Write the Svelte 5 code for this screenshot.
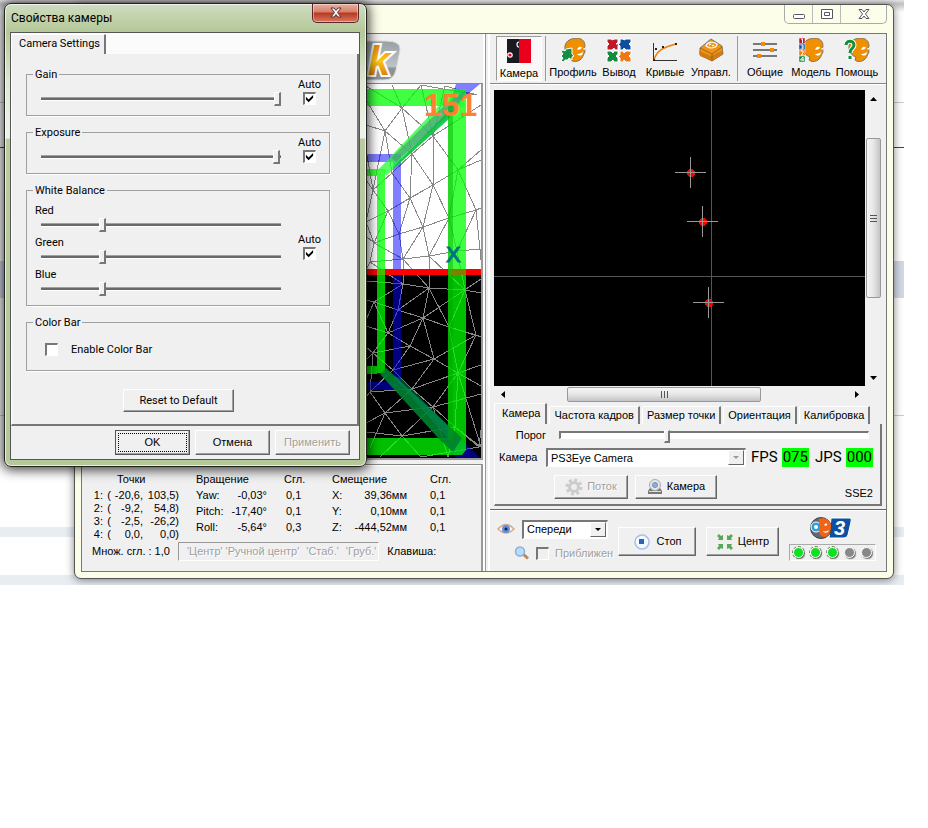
<script>
    let gain = 255
    let exposure = 254
    let threshold = 87
    let gainAuto = true
    let exposureAuto = true
    let whiteAuto = true
    let colorBar = false
    let zoomed = false
    let source = 'PS3Eye Camera'
    let view = 'Спереди'
    let activeTab = 'Камера'
    let activeTool = 'Камера'

    let balance = [
        {name: 'Red', value: 63},
        {name: 'Green', value: 63},
        {name: 'Blue', value: 64}
    ]

    const tools = [
        {name: 'Камера', icon: 'camera', split: true},
        {name: 'Профиль', icon: 'profile'},
        {name: 'Вывод', icon: 'output'},
        {name: 'Кривые', icon: 'curves'},
        {name: 'Управл.', icon: 'keys', split: true},
        {name: 'Общие', icon: 'general'},
        {name: 'Модель', icon: 'model'},
        {name: 'Помощь', icon: 'help'}
    ]

    const tabs = ['Камера', 'Частота кадров', 'Размер точки', 'Ориентация', 'Калибровка']

    const points = [
        ['1:', '-20,6,', '103,5)'],
        ['2:', '-9,2,', '54,8)'],
        ['3:', '-2,5,', '-26,2)'],
        ['4:', '0,0,', '0,0)']
    ]

    const axes = [
        ['Yaw:', '-0,03°', '0,1', 'X:', '39,36мм', '0,1'],
        ['Pitch:', '-17,40°', '0,1', 'Y:', '0,10мм', '0,1'],
        ['Roll:', '-5,64°', '0,3', 'Z:', '-444,52мм', '0,1']
    ]

    const blobs = [[690, 172], [702, 221], [708, 302]]
    const leds = [true, true, true, false, false]
</script>

{#snippet skull()}
    <path d="M5 8C6 2 12 0 18 0C23 1 25 4 25 8C24 10 25 12 25 14C23 17 23 20 20 22C17 24 13 24 11 22L12 19C8 18 4 13 5 8Z" fill="#f09000" stroke="#666" stroke-width=".8" />
    <path d="M18 10C19 8.500 21 8.500 22 9.500C21 11.500 18.500 12 17 11.500ZM23.500 10H25V11.500H23.500ZM17 16C19 16.500 22 15 23.500 13.500L22 17C20 18 18 17.500 17 16Z" fill="#fff" />
{/snippet}

{#snippet toolIcon(name)}
    <svg width="26" height="24" viewBox="0 0 26 24" aria-hidden="true">
        {#if name === 'camera'}
            <rect x="1" width="12" height="24" fill="#1a1820" />
            <rect x="13" width="12" height="24" fill="#e8001c" />
            <path d="M13 3A2 2.500 0 0 0 13 8" fill="none" stroke="#fff" stroke-width="1.200" />
            <circle cx="4" cy="16" r="2.200" fill="#e8001c" stroke="#fff" stroke-width="1.200" />
        {:else if name === 'profile'}
            {@render skull()}
            <path d="M1 13L3 12L5 13L6 11L12 10V16L14 18L12 19V22L9 20L8 22H5L4 24L1 23L3 20L1 18L3 16Z" fill="#129040" stroke="#fff" />
        {:else if name === 'output'}
            <g stroke="#fff" stroke-width="1">
                <path d="M1 1H5L7 2L8 1H12V4L10 6H13L12 8V12H9L8 10L6 12H1V8L3 6L1 4Z" fill="#c01828" />
                <path d="M14 1H17L18 2L20 1H25V4L23 6L25 8V12H20L18 10L17 12H14V8L12 6L14 5Z" fill="#0c4ea0" />
                <path d="M1 13H5L7 15L8 13H12V16L10 18L12 20V24H8L7 22L5 24H1V20L3 18L1 16Z" fill="#108c3c" />
                <path d="M14 13H17L18 15L20 13H25V16L23 18L25 20V24H20L18 22L17 24H14V20L12 18L14 17Z" fill="#f07810" />
            </g>
        {:else if name === 'curves'}
            <path d="M1.500 5V22.500H25" fill="none" stroke="#333" />
            <path d="M2 22C5 11 14 9 24 6" fill="none" stroke="#f07c10" stroke-width="1.500" />
            <path d="M3 10h2v2h-2zM10 8h2v2h-2zM23 5h2v2h-2zM1 21h2v2h-2z" fill="#222" />
        {:else if name === 'keys'}
            <path d="M2 10L13 1L24 8L25 16L14 23L2 17Z" fill="#f09418" stroke="#777" />
            <path d="M1 13L13 18L25 12L24 17L14 23L2 18Z" fill="#d07c10" />
            <path d="M2 10L14 16L24 9M14 16V23" fill="none" stroke="#905810" stroke-width=".8" />
            <path d="M8 8C9 4 15 3 19 6C19 9 15 10 12 10ZM11 7L13 6M14 8L16 7" fill="none" stroke="#fff" stroke-width="1.200" />
        {:else if name === 'general'}
            <path d="M1 6H25M1 12H25M1 18H25" stroke="#777" stroke-width="2" />
            <path d="M9 4h4v4h-4zM18 10h4v4h-4zM5 16h4v4h-4z" fill="#f08c00" />
        {:else if name === 'model'}
            {@render skull()}
            <g stroke="#fff" stroke-width=".5">
                <path d="M1 0h6v6h-6z" fill="#c01828" />
                <path d="M1 6h6v6h-6z" fill="#0c4ea0" />
                <path d="M1 12h6v6h-6z" fill="#f07810" />
                <path d="M1 18h6v6h-6z" fill="#108c3c" />
                <path d="M3 1L4.500 1V5M2.500 7H5V11H2.500M3.500 9H5M2.500 13H5V15L3 17H5.500M5 23V19L2.500 22H6" fill="none" stroke-width="1" />
            </g>
        {:else}
            {@render skull()}
            <g fill="none">
                <path d="M2 7C2 2 10 2 10 7C10 11 6 10 6 15M6 18V22" stroke="#fff" stroke-width="5" />
                <path d="M2 7C2 2 10 2 10 7C10 11 6 10 6 15M6 18V21" stroke="#109040" stroke-width="3" />
            </g>
        {/if}
    </svg>
{/snippet}

<div class="desktop">
    <div class="backdrop" aria-hidden="true">
        <div class="band band-top"></div>
        <div class="band rule"></div>
        <div class="band rule dark"></div>
        <div class="band block"></div>
        <div class="band rule far"></div>
        <div class="band soft"></div>
        <div class="band soft last"></div>
    </div>

    <section class="window">
        <header class="caption">
            <div class="caption-buttons">
                <button type="button" aria-label="Свернуть">
                    <svg width="14" height="12" viewBox="0 0 14 12"><rect x="1.500" y="6.500" width="11" height="4" rx="1" fill="#fff" stroke="#556" /></svg>
                </button>
                <button type="button" aria-label="Развернуть">
                    <svg width="14" height="12" viewBox="0 0 14 12"><path d="M1.500 1.500H12.500V10.500H1.500ZM4.500 4.500H9.500V7.500H4.500Z" fill="#fff" stroke="#556" /></svg>
                </button>
                <button type="button" class="wide" aria-label="Закрыть">
                    <svg width="14" height="12" viewBox="0 0 14 12"><path d="M2 1.500H5L7 4L9 1.500H12L8.500 6L12 10.500H9L7 8L5 10.500H2L5.500 6Z" fill="#fff" stroke="#556" /></svg>
                </button>
            </div>
        </header>

        <div class="client">
            <div class="left">
                <div class="brand">
                    <svg width="60" height="46" viewBox="0 0 60 46" aria-hidden="true">
                        <defs>
                            <linearGradient id="badge" x2="0" y2="1">
                                <stop offset="0" stop-color="#98a0a4" />
                                <stop offset=".65" stop-color="#bcc4c8" />
                                <stop offset=".7" stop-color="#8c9498" />
                            </linearGradient>
                            <linearGradient id="fire" x2="0" y2="1">
                                <stop offset="0" stop-color="#e07000" />
                                <stop offset=".5" stop-color="#ffc818" />
                                <stop offset="1" stop-color="#d05800" />
                            </linearGradient>
                        </defs>
                        <path d="M0 4H45Q60 4 59 13L55 33Q53 43 43 43H0Z" fill="url(#badge)" stroke="#d8dcde" />
                        <text x="27" y="38" class="brand-letter" fill="url(#fire)">k</text>
                    </svg>
                </div>

                <svg class="scene" viewBox="82 84 399 374" preserveAspectRatio="xMaxYMid slice" aria-hidden="true">
                    <rect x="82" y="84" width="399" height="188" fill="#fff" />
                    <rect x="82" y="272" width="399" height="186" fill="#000" />
                    <g class="mesh">
                        <path d="M366 125L385 131L402 108L421 85L433 136L402 108L366 86M392 85L402 108L385 131L366 100M421 85L477 95L445 86L433 136L481 105M385 131L412 154L433 136L458 170L481 150M402 108L412 154L433 185L458 170L481 160M385 131L392 173L412 154L410 198L433 185L433 136" />
                        <path d="M366 125L385 131L373 190L392 173L410 198L388 211L373 190L366 150M366 180L373 190L366 222L388 211L399 234L410 198L423 227L449 218L433 185L423 227L399 234L374 243L388 211L433 185M458 170L449 218L476 210L458 170M476 210L481 208M366 222L374 243L370 262L403 259L399 234M423 227L429 256L449 218L457 251L476 210L481 260M403 259L423 227M403 259L429 256L457 251L481 249M366 236L374 243L403 259M370 262L366 270" />
                        <path d="M370 262L403 284L403 259L429 288L429 256L465 290L457 251M366 281L403 284L429 288L465 290L481 293M366 300L374 302L403 284L398 310L374 302L366 320M465 290L449 327L429 288L423 318L398 310L388 333L374 302M398 310L429 288M423 318L481 279M423 318L449 327L481 337L476 335L465 290M388 333L423 318L410 346L388 333L373 353L366 347M366 326L388 333M434 359L476 335L449 327M410 346L434 359L423 318" />
                        <path d="M410 346L373 353L393 370L410 346L434 359L393 370L412 389L434 359L458 373L449 327M476 335L458 373L481 386M458 373L412 389L433 407L458 373L481 365M393 370L370 392L373 353L366 360M370 392L412 389L385 413L370 392L366 397M385 413L433 407L455 427L458 373M385 413L402 436L433 407L481 394M366 423L385 413L370 448M366 432L402 436L455 427L481 447L458 373M402 436L421 457L479 447L481 430M402 436L380 457M433 407L448 457L455 427L479 447" />
                    </g>
                    <g fill="#0000ff" fill-opacity=".5">
                        <path d="M82 154H401V162H82ZM393 162H401V382H393ZM82 382H401V390H82Z" />
                        <path d="M456 84H480L462 99L448 110L452 96ZM448 446L462 440L480 458H456Z" />
                    </g>
                    <path d="M82 269H481V275H82Z" fill="#f00" />
                    <g fill="#00ff00" fill-opacity=".75">
                        <path d="M82 89H466V106H82ZM448 106H466V450L462 455H82V438H448Z" />
                        <path d="M82 169H377V176H82ZM377 169H385V373H377ZM82 366H377V374H82Z" />
                    </g>
                    <path d="M378 170L446 98L464 100L464 104L386 176L384 170Z" fill="#20ff30" fill-opacity=".75" />
                    <path d="M391 158L444 106L466 90L458 106L396 162Z" fill="#4c9080" fill-opacity=".6" />
                    <path d="M398 162L448 112L454 110L448 120L392 170Z" fill="#00b040" fill-opacity=".7" />
                    <path d="M380 374L386 368L462 438L453 452L440 440Z" fill="#008030" fill-opacity=".9" />
                    <path d="M393 376L401 378L452 430L450 440L440 430Z" fill="#008858" fill-opacity=".5" />
                    <path d="M448 106H453V440H448Z" fill="#00a000" fill-opacity=".4" />
                    <path d="M452 269H466V275H452Z" fill="#808000" />
                    <text x="446" y="262" class="axis">X</text>
                    <text x="424" y="116" class="count">151</text>
                </svg>

                <div class="stats">
                    <div class="tables">
                        <table class="points">
                            <thead>
                                <tr><th colspan="4">Точки</th></tr>
                            </thead>
                            <tbody>
                                {#each points as [label, x, y]}
                                    <tr><td>{label}</td><td>(</td><td>{x}</td><td>{y}</td></tr>
                                {/each}
                            </tbody>
                        </table>
                        <table class="axes">
                            <thead>
                                <tr><th colspan="2">Вращение</th><th>Сгл.</th><th colspan="2">Смещение</th><th>Сгл.</th></tr>
                            </thead>
                            <tbody>
                                {#each axes as row}
                                    <tr>
                                        {#each row as cell}
                                            <td>{cell}</td>
                                        {/each}
                                    </tr>
                                {/each}
                            </tbody>
                        </table>
                    </div>
                    <div class="status">
                        <span>Множ. сгл. : 1,0</span>
                        <div class="hotkeys">
                            <span>'Центр'</span>
                            <span>'Ручной центр'</span>
                            <span>'Стаб.'</span>
                            <span>'Груб.'</span>
                        </div>
                        <span>Клавиша:</span>
                    </div>
                </div>
            </div>

            <div class="splitter"></div>

            <div class="right">
                <nav class="toolbar">
                    {#each tools as tool}
                        <button type="button" class:pressed={activeTool === tool.name} on:click={() => activeTool = tool.name}>
                            {@render toolIcon(tool.icon)}
                            <span>{tool.name}</span>
                        </button>
                        {#if tool.split}
                            <i class="separator"></i>
                        {/if}
                    {/each}
                </nav>

                <div class="view">
                    <div class="video">
                        <svg class="feed" viewBox="494 90 371 296" preserveAspectRatio="xMidYMid slice" aria-hidden="true">
                            <path d="M711.500 0V600M0 276.500H1400" stroke="#555" />
                            {#each blobs as [x, y]}
                                <circle cx={x + 1} cy={y + 1} r="4" fill="#f00" />
                                <path d="M{x - 15} {y + .5}h31M{x + .5} {y - 15}v31" stroke="#999" />
                            {/each}
                        </svg>
                        <div class="scroll vertical">
                            <button type="button" aria-label="Вверх"><svg width="7" height="4" viewBox="0 0 7 4"><path d="M0 4L3.500 0L7 4Z" /></svg></button>
                            <div class="thumb"><i></i><i></i><i></i></div>
                            <button type="button" aria-label="Вниз"><svg width="7" height="4" viewBox="0 0 7 4"><path d="M0 0L3.500 4L7 0Z" /></svg></button>
                        </div>
                        <div class="scroll horizontal">
                            <button type="button" aria-label="Влево"><svg width="4" height="7" viewBox="0 0 4 7"><path d="M4 0L0 3.500L4 7Z" /></svg></button>
                            <div class="thumb"><i></i><i></i><i></i></div>
                            <button type="button" aria-label="Вправо"><svg width="4" height="7" viewBox="0 0 4 7"><path d="M0 0L4 3.500L0 7Z" /></svg></button>
                        </div>
                    </div>

                    <div class="tabs" role="tablist">
                        {#each tabs as tab}
                            <button type="button" role="tab" aria-selected={activeTab === tab} class:selected={activeTab === tab} on:click={() => activeTab = tab}>{tab}</button>
                        {/each}
                    </div>
                    <div class="page">
                        <div class="row threshold">
                            <label for="threshold">Порог</label>
                            <input id="threshold" type="range" class="long" min="0" max="255" bind:value={threshold}>
                        </div>
                        <div class="row source">
                            <label for="source">Камера</label>
                            <div class="combo idle">
                                <select id="source" bind:value={source}>
                                    <option>PS3Eye Camera</option>
                                </select>
                                <span class="drop"></span>
                            </div>
                            <span class="rate">FPS <b>075</b></span>
                            <span class="rate">JPS <b>000</b></span>
                        </div>
                        <div class="row actions">
                            <button type="button" class="push" disabled>
                                <svg width="18" height="18" viewBox="0 0 18 18" aria-hidden="true">
                                    <circle cx="9" cy="9" r="7" fill="none" stroke="#ccc" stroke-width="3" stroke-dasharray="3 2.500" />
                                    <circle cx="9" cy="9" r="4.500" fill="#eee" stroke="#ccc" stroke-width="3" />
                                </svg>
                                Поток
                            </button>
                            <button type="button" class="push">
                                <svg width="16" height="16" viewBox="0 0 16 16" aria-hidden="true">
                                    <path d="M1 12L3 9H13L15 12V15H1Z" fill="#777" />
                                    <path d="M2 12H14V13H2Z" fill="#ddd" />
                                    <circle cx="8" cy="6" r="5.500" fill="#e4e6e8" stroke="#aaa" />
                                    <circle cx="8" cy="6" r="2.500" fill="#7fb2e8" stroke="#88a" />
                                </svg>
                                Камера
                            </button>
                            <span class="cpu">SSE2</span>
                        </div>
                    </div>
                </div>

                <div class="control">
                    <div class="look">
                        <svg width="18" height="12" viewBox="0 0 18 12" aria-hidden="true">
                            <path d="M1 6Q9 -3 17 6Q9 14 1 6Z" fill="#f4f6fa" stroke="#d8a888" stroke-width="1.500" />
                            <circle cx="9" cy="6" r="4" fill="#5c90d8" />
                            <circle cx="9" cy="6" r="1.500" fill="#10204c" />
                        </svg>
                        <div class="combo">
                            <select aria-label="Вид" bind:value={view}>
                                <option>Спереди</option>
                            </select>
                            <span class="drop"></span>
                        </div>
                    </div>
                    <div class="look zoom">
                        <svg width="16" height="14" viewBox="0 0 16 14" aria-hidden="true">
                            <path d="M9 8L14 12.500" stroke="#c08850" stroke-width="3" />
                            <circle cx="6" cy="5.500" r="4.500" fill="#b8dcfa" stroke="#88b0e0" stroke-width="1.500" />
                        </svg>
                        <input id="zoom" type="checkbox" bind:checked={zoomed} disabled>
                        <label for="zoom">Приближен</label>
                    </div>
                    <button type="button" class="push big stop">
                        <svg width="18" height="18" viewBox="0 0 18 18" aria-hidden="true">
                            <circle cx="9" cy="9" r="7" fill="#f4faff" stroke="#a4c0ec" stroke-width="1.500" />
                            <rect x="6" y="6" width="5" height="5" fill="#2866b8" />
                        </svg>
                        Стоп
                    </button>
                    <button type="button" class="push big center">
                        <svg width="18" height="18" viewBox="0 0 18 18" aria-hidden="true">
                            <g fill="#58a858">
                                <path d="M1 3L3 1L5 3L7 2V7H2L3 5Z" />
                                <path d="M17 3L15 1L13 3L11 2V7H16L15 5Z" />
                                <path d="M1 15L3 17L5 15L7 16V11H2L3 13Z" />
                                <path d="M17 15L15 17L13 15L11 16V11H16L15 13Z" />
                            </g>
                        </svg>
                        Центр
                    </button>
                    <div class="state">
                        <svg width="44" height="24" viewBox="0 0 44 24" aria-hidden="true">
                            <path d="M22 2H41Q43 2 42 6L39 19Q38 22 35 22H20Z" fill="#0c50a4" stroke="#fff" />
                            <circle cx="12" cy="12" r="10.500" fill="#667" stroke="#444" />
                            <circle cx="7" cy="11" r="5" fill="#28a0e0" stroke="#fff" />
                            <path d="M10 3C16 1 21 4 22 9C22 17 19 21 15 21C11 20 9 16 10 12Z" fill="#f06414" />
                            <path d="M16 8C17 7 19 8 18 9C17 10 16 10 15 9ZM14 15C16 16 19 15 20 14L19 16C17 17 15 17 14 15Z" fill="#fff" />
                            <circle cx="7" cy="11" r="2" fill="#fff" />
                            <text x="25" y="19" class="three">3</text>
                        </svg>
                        <div class="leds">
                            {#each leds as lit}
                                <span class="led" class:lit></span>
                            {/each}
                        </div>
                    </div>
                </div>
            </div>
        </div>
    </section>

    <section class="dialog" role="dialog" aria-labelledby="dialog-title">
        <header>
            <h1 id="dialog-title">Свойства камеры</h1>
            <button type="button" class="close" aria-label="Закрыть">
                <svg width="12" height="11" viewBox="0 0 12 11"><path d="M1 1H4L6 3.500L8 1H11L7.500 5.500L11 10H8L6 7.500L4 10H1L4.500 5.500Z" fill="#fff" stroke="#5c3038" /></svg>
            </button>
        </header>
        <form on:submit|preventDefault>
            <div class="tabs" role="tablist">
                <button type="button" role="tab" aria-selected="true" class="selected">Camera Settings</button>
            </div>
            <div class="sheet">
                <fieldset>
                    <legend>Gain</legend>
                    <div class="setting">
                        <input type="range" aria-label="Gain" min="0" max="255" bind:value={gain}>
                        <label>Auto <input type="checkbox" bind:checked={gainAuto}></label>
                    </div>
                </fieldset>
                <fieldset>
                    <legend>Exposure</legend>
                    <div class="setting">
                        <input type="range" aria-label="Exposure" min="0" max="255" bind:value={exposure}>
                        <label>Auto <input type="checkbox" bind:checked={exposureAuto}></label>
                    </div>
                </fieldset>
                <fieldset>
                    <legend>White Balance</legend>
                    <div class="setting white">
                        <div class="channels">
                            {#each balance as channel}
                                <label for={channel.name}>{channel.name}</label>
                                <input id={channel.name} type="range" min="0" max="255" bind:value={channel.value}>
                            {/each}
                        </div>
                        <label>Auto <input type="checkbox" bind:checked={whiteAuto}></label>
                    </div>
                </fieldset>
                <fieldset>
                    <legend>Color Bar</legend>
                    <label class="bar"><input type="checkbox" bind:checked={colorBar}> Enable Color Bar</label>
                </fieldset>
                <button type="button" class="push reset">Reset to Default</button>
            </div>
            <footer>
                <button type="submit" class="push default"><span>OK</span></button>
                <button type="button" class="push">Отмена</button>
                <button type="button" class="push" disabled>Применить</button>
            </footer>
        </form>
    </section>
</div>


<style>
    :global(body) {
        margin: 0;
        background: #fff;
    }

    .desktop, .desktop :global(*) {
        box-sizing: border-box;
    }

    .desktop {
        position: relative;
        padding: 4px 34px 6px 74px;
        overflow: hidden;
        font: 11px/13px "Liberation Sans", Arial, sans-serif;
        color: #000;
    }

    button, input, select {
        font: inherit;
        color: inherit;
        margin: 0;
    }

    svg {
        display: block;
        flex: none;
    }

    /* page behind the windows */
    .backdrop {
        position: absolute;
        inset: 0 24px 0 0;
        overflow: hidden;
    }

    .band-top {
        height: 12px;
        margin-bottom: 90px;
        background: linear-gradient(#e4e4e4, #c0c0c0 4px, #fff);
    }

    .rule {
        height: 1px;
        margin-bottom: 44px;
        background: #ccc;
    }

    .rule.dark {
        margin-bottom: 113px;
        background: #444;
    }

    .block {
        height: 37px;
        margin-bottom: 117px;
        background: #d3d8e6;
    }

    .rule.far {
        margin-bottom: 111px;
    }

    .soft {
        height: 10px;
        margin-bottom: 38px;
        background: #e8edf2;
    }

    .soft.last {
        margin: 0;
    }

    /* main window */
    .window {
        position: relative;
        padding: 0 6px 6px;
        border: 1px solid #555;
        border-radius: 7px;
        background: #fdfeea;
        box-shadow: 0 1px 9px rgba(0, 0, 0, .5);
    }

    .caption {
        display: flex;
        justify-content: flex-end;
        height: 28px;
    }

    .caption-buttons {
        display: flex;
        height: 19px;
        border: 1px solid #aaa;
        border-top: none;
        border-radius: 0 0 5px 5px;
    }

    .caption-buttons button {
        display: flex;
        align-items: center;
        justify-content: center;
        width: 28px;
        padding: 0;
        border: none;
        border-right: 1px solid #bbb;
        background: none;
    }

    .caption-buttons .wide {
        width: 45px;
        border: none;
    }

    .client {
        display: grid;
        grid-template-columns: minmax(0, 1fr) 7px 396px;
        border: 1px solid #777;
        background: #f0f0f0;
    }

    .left {
        display: flex;
        flex-direction: column;
    }

    .brand {
        display: flex;
        justify-content: flex-end;
        height: 50px;
        padding: 3px 82px 0 0;
        border-bottom: 1px solid #888;
    }

    .brand-letter {
        font: italic bold 40px "Liberation Sans", Arial, sans-serif;
        stroke: #fff;
        stroke-width: 4px;
        paint-order: stroke;
    }

    .scene {
        width: 100%;
        height: 376px;
        border-right: 2px solid #999;
        border-bottom: 2px solid #999;
    }

    .mesh path {
        fill: none;
        stroke: #888;
        shape-rendering: crispEdges;
    }

    .axis {
        font: 22px "Liberation Sans", Arial, sans-serif;
        fill: #007088;
        stroke: #007088;
    }

    .count {
        font: bold 32px "Liberation Sans", Arial, sans-serif;
        fill: #ff8030;
    }

    .splitter {
        border: solid #fff;
        border-width: 0 2px;
        background: linear-gradient(90deg, #999 1px, #f0f0f0 1px);
    }

    .stats {
        flex: 1;
        margin-top: 4px;
        padding: 8px 8px 0 10px;
        border-top: 1px solid #888;
        border-right: 2px solid #999;
        box-shadow: inset 0 1px #fff;
    }

    .tables {
        display: flex;
        align-items: flex-start;
    }

    table {
        border-collapse: collapse;
    }

    th, td {
        padding: 0;
        font-weight: normal;
        text-align: left;
        white-space: nowrap;
    }

    .points {
        width: 87px;
        margin-right: 17px;
    }

    .points th {
        height: 16px;
        padding-left: 25px;
        vertical-align: top;
    }

    .points td {
        height: 13px;
        text-align: right;
    }

    .points td:first-child {
        width: 11px;
    }

    .points td:nth-child(2) {
        width: 8px;
    }

    .points td:nth-child(3) {
        width: 32px;
    }

    .axes th, .axes td {
        height: 16px;
        vertical-align: top;
    }

    .axes td:first-child {
        width: 35px;
    }

    .axes td:nth-child(2) {
        width: 36px;
        text-align: right;
    }

    .axes td:nth-child(4) {
        width: 21px;
    }

    .axes td:nth-child(5) {
        width: 54px;
        text-align: right;
    }

    .axes td:nth-child(3) {
        width: 65px;
        padding-left: 19px;
    }

    .axes th:nth-child(2) {
        padding-left: 17px;
    }

    .axes td:nth-child(6), .axes th:last-child {
        padding-left: 23px;
    }

    .status {
        display: flex;
        align-items: center;
        gap: 8px;
        margin-top: 1px;
        white-space: nowrap;
    }

    .hotkeys {
        display: flex;
        gap: 7px;
        height: 19px;
        padding: 2px 2px 0 8px;
        border: 1px solid #999;
        border-right-color: #fff;
        border-bottom-color: #fff;
        color: #a0a0a0;
        text-shadow: 1px 1px #fff;
    }

    .hotkeys span:first-child {
        margin-right: -4px;
    }

    /* toolbar */
    .toolbar {
        display: flex;
        height: 50px;
        padding: 2px 0 2px 6px;
        border-bottom: 1px solid #888;
    }

    .toolbar button {
        display: flex;
        flex-direction: column;
        align-items: center;
        gap: 4px;
        width: 46px;
        padding: 2px 0 0;
        border: none;
        background: none;
        white-space: nowrap;
    }

    .toolbar .pressed {
        border: 1px solid #999;
        border-right-color: #fff;
        border-bottom-color: #fff;
        background: #f8f8f8;
    }

    .separator {
        width: 1px;
        margin: 0 4px 0 3px;
        background: #999;
    }

    .view {
        padding: 5px 4px 3px;
        border-top: 1px solid #fff;
        border-bottom: 1px solid #666;
    }

    .video {
        display: grid;
        grid-template-columns: minmax(0, 1fr) 17px;
        grid-template-rows: 296px 17px;
    }

    .feed {
        width: 100%;
        height: 100%;
        background: #000;
        shape-rendering: crispEdges;
    }

    .scroll {
        display: flex;
        align-items: center;
        justify-content: space-between;
        background: #f0f0f0;
    }

    .scroll button {
        display: flex;
        align-items: center;
        justify-content: center;
        width: 17px;
        height: 17px;
        padding: 0;
        border: none;
        background: none;
    }

    .scroll .thumb {
        display: flex;
        align-items: center;
        justify-content: center;
        gap: 2px;
        border: 1px solid #999;
        border-radius: 2px;
    }

    .thumb i {
        background: #555;
    }

    .vertical {
        flex-direction: column;
    }

    .vertical .thumb {
        flex-direction: column;
        width: 15px;
        height: 160px;
        margin-bottom: 40px;
        background: linear-gradient(90deg, #f6f6f6, #e6e6e6 50%, #c4c4c8);
    }

    .vertical .thumb i {
        width: 7px;
        height: 1px;
    }

    .horizontal .thumb {
        width: 194px;
        height: 15px;
        margin-right: 31px;
        background: linear-gradient(#f6f6f6, #e6e6e6 50%, #c4c4c8);
    }

    .horizontal .thumb i {
        width: 1px;
        height: 7px;
    }

    .tabs {
        display: flex;
        align-items: flex-end;
        height: 21px;
    }

    .tabs button {
        height: 18px;
        padding: 0 4px;
        margin-left: 2px;
        border: solid #fff;
        border-width: 1px 2px 0 1px;
        border-right-color: #777;
        border-radius: 2px 1px 0 0;
        background: #f0f0f0;
        white-space: nowrap;
    }

    .tabs .selected {
        height: 21px;
        margin-left: 0;
        padding: 0 5px 2px 7px;
    }

    .page {
        height: 82px;
        padding: 3px 7px 0 4px;
        border: solid #fff;
        border-width: 0 2px 2px 1px;
        border-right-color: #777;
        border-bottom-color: #777;
    }

    .row {
        display: flex;
        align-items: center;
    }

    .threshold label {
        width: 47px;
        text-align: right;
    }

    .threshold input {
        flex: 1;
        margin: 0 4px 0 13px;
    }

    .source {
        gap: 5px;
        margin-top: 5px;
    }

    .source label {
        width: 42px;
    }

    .source .combo {
        width: 200px;
    }

    .rate {
        display: flex;
        align-items: center;
        gap: 4px;
        font: 15px/19px Roboto, sans-serif;
    }

    .rate + .rate {
        margin-left: auto;
    }

    .rate b {
        padding: 0 1px;
        background: #00ff00;
        font-weight: normal;
    }

    .actions {
        gap: 7px;
        margin-top: 6px;
        padding-left: 55px;
    }

    .actions .push {
        height: 24px;
        width: 74px;
    }

    .actions .push + .push {
        width: 82px;
    }

    .cpu {
        margin: 14px 0 0 auto;
    }

    .push {
        display: flex;
        align-items: center;
        justify-content: center;
        gap: 4px;
        padding: 0;
        border: 1px solid #fff;
        border-right-color: #666;
        border-bottom-color: #666;
        background: #f0f0f0;
        box-shadow: inset -1px -1px #a0a0a0;
        white-space: nowrap;
    }

    .push:disabled {
        color: #a0a0a0;
        text-shadow: 1px 1px #fff;
    }

    .combo {
        position: relative;
        height: 19px;
        border: 2px solid #777;
        border-right: 1px solid #fff;
        border-bottom: 1px solid #fff;
        background: #fff;
    }

    .combo select {
        display: block;
        width: 100%;
        height: 16px;
        padding: 0 18px 0 3px;
        border: none;
        outline: none;
        appearance: none;
        background: none;
    }

    .drop {
        position: absolute;
        top: 0;
        right: 1px;
        width: 16px;
        height: 15px;
        border: 1px solid #fff;
        border-right-color: #666;
        border-bottom-color: #666;
        background: #f0f0f0;
        pointer-events: none;
    }

    .drop::after {
        content: "";
        display: block;
        margin: 5px 4px;
        border: solid transparent;
        border-width: 3px 3px 0;
        border-top-color: #000;
    }

    .idle .drop::after {
        border-top-color: #999;
    }

    /* bottom controls */
    .control {
        display: grid;
        grid-template-columns: 111px 78px 73px 87px;
        grid-template-rows: 18px 20px;
        column-gap: 10px;
        row-gap: 5px;
        padding: 9px 0 8px 7px;
        border-top: 1px solid #fff;
    }

    .look {
        display: flex;
        align-items: center;
        grid-column: 1;
        gap: 7px;
        min-width: 0;
    }

    .look .combo {
        width: 87px;
    }

    .zoom {
        gap: 6px;
        padding-left: 17px;
    }

    .zoom label {
        color: #a0a0a0;
        text-shadow: 1px 1px #fff;
    }

    .big {
        grid-row: 1 / 3;
        height: 29px;
        align-self: center;
    }

    .stop {
        grid-column: 2;
        gap: 6px;
    }

    .center {
        grid-column: 3;
    }

    .state {
        grid-row: 1 / 3;
        grid-column: 4;
        margin-top: -4px;
    }

    .state svg {
        margin-left: 20px;
    }

    .three {
        font: italic bold 20px "Liberation Sans", Arial, sans-serif;
        fill: #fff;
    }

    .leds {
        display: flex;
        height: 17px;
        margin-top: 4px;
        border: 1px solid #aaa;
        border-right-color: #fff;
        border-bottom-color: #fff;
    }

    .led {
        width: 11px;
        height: 11px;
        margin: 2px 3px;
        border: 1px solid #fff;
        border-radius: 50%;
        background: #888;
        box-shadow: 1px 1px 1px #777;
    }

    .led.lit {
        background: #10e020;
        outline: 1px dashed #777;
    }

    /* camera properties */
    .dialog {
        position: absolute;
        left: 4px;
        top: 3px;
        width: 363px;
        padding: 0 6px 6px 5px;
        border: 1px solid #222;
        border-radius: 7px;
        background: linear-gradient(#cfdcc0, #b4c898 28px, #dfe8d4 80px, #eef3ea 134px, #b9cb9f 135px, #b4c898);
        box-shadow: inset 0 0 0 1px rgba(255, 255, 255, .7), 0 1px 12px 2px rgba(0, 0, 0, .75);
    }

    .dialog header {
        display: flex;
        justify-content: space-between;
        height: 28px;
        padding: 0 1px;
    }

    h1 {
        margin: 7px 0 0;
        font: 12px/14px Roboto, "Segoe UI", sans-serif;
    }

    .close {
        display: flex;
        align-items: center;
        justify-content: center;
        width: 47px;
        height: 19px;
        padding: 0 0 1px;
        border: 1px solid #60242c;
        border-top: none;
        border-radius: 0 0 5px 5px;
        background: linear-gradient(#e8b0a0, #d48068 8px, #b83820 9px, #d87860);
        box-shadow: inset 0 0 0 1px rgba(255, 255, 255, .4);
    }

    form {
        border: 1px solid #555;
        background: #f0f0f0;
    }

    form .tabs {
        background: #fbfbfb;
        font-family: Roboto, Tahoma, sans-serif;
    }

    form .tabs .selected {
        height: 20px;
        padding: 0 4px 2px 7px;
    }

    .sheet {
        display: flex;
        flex-direction: column;
        height: 372px;
        padding: 14px 26px 0 14px;
        border: solid #fff;
        border-width: 0 2px 2px 1px;
        border-right-color: #777;
        border-bottom-color: #777;
        font-family: Roboto, Tahoma, sans-serif;
    }

    fieldset {
        width: 304px;
        margin: 0 0 10px;
        padding: 0;
        border: 1px solid #a0a0a0;
        box-shadow: 1px 1px #fff;
    }

    legend {
        margin-left: 6px;
        padding: 0 2px;
    }

    .setting {
        display: flex;
        justify-content: space-between;
        height: 34px;
        padding: 0 8px 0 14px;
    }

    .setting > label {
        display: flex;
        flex-direction: column;
        align-items: center;
        gap: 1px;
        margin-top: -3px;
    }

    .setting > input {
        margin-top: 10px;
    }

    .white {
        height: 108px;
    }

    .white > label {
        margin-top: 36px;
    }

    .channels {
        display: flex;
        flex-direction: column;
        margin-top: 4px;
    }

    .channels label {
        margin: 3px 0 0 -6px;
    }

    .channels input {
        height: 15px;
    }

    .bar {
        display: flex;
        align-items: center;
        gap: 13px;
        height: 41px;
        padding: 1px 0 2px 18px;
    }

    input[type=checkbox] {
        appearance: none;
        flex: none;
        width: 13px;
        height: 13px;
        border: 2px solid #777;
        border-right: 1px solid #fff;
        border-bottom: 1px solid #fff;
        background: #fff;
    }

    input[type=checkbox]:disabled {
        background: #f0f0f0;
    }

    input[type=checkbox]:checked::before {
        content: "";
        display: block;
        width: 9px;
        height: 9px;
        background: #000;
        clip-path: polygon(10% 30%, 40% 60%, 90% 10%, 90% 42%, 40% 92%, 10% 62%);
    }

    input[type=range] {
        appearance: none;
        width: 240px;
        height: 16px;
        background: none;
    }

    input[type=range]::-webkit-slider-runnable-track {
        height: 4px;
        border-top: 1px solid #a0a0a0;
        border-bottom: 1px solid #fff;
        background: #696969;
    }

    input[type=range]::-webkit-slider-thumb {
        appearance: none;
        width: 7px;
        height: 14px;
        margin-top: -6px;
        border: 1px solid #fff;
        border-right: 2px solid #777;
        border-bottom: 2px solid #777;
        background: #f0f0f0;
    }

    input.long::-webkit-slider-runnable-track {
        height: 8px;
        border: 2px solid #777;
        border-right: 1px solid #fff;
        border-bottom: 1px solid #fff;
        background: #fff;
    }

    input.long::-webkit-slider-thumb {
        width: 6px;
        height: 13px;
        margin-top: -3px;
    }

    .reset {
        width: 111px;
        height: 23px;
        margin: 8px 0 0 97px;
    }

    footer {
        display: flex;
        justify-content: flex-end;
        gap: 5px;
        height: 33px;
        padding: 4px 9px 4px;
    }

    footer .push {
        width: 75px;
    }

    .default {
        padding: 2px;
        border: 1px solid #555;
    }

    .default span {
        flex: 1;
        height: 100%;
        border: 1px dotted #000;
        line-height: 17px;
    }
</style>
